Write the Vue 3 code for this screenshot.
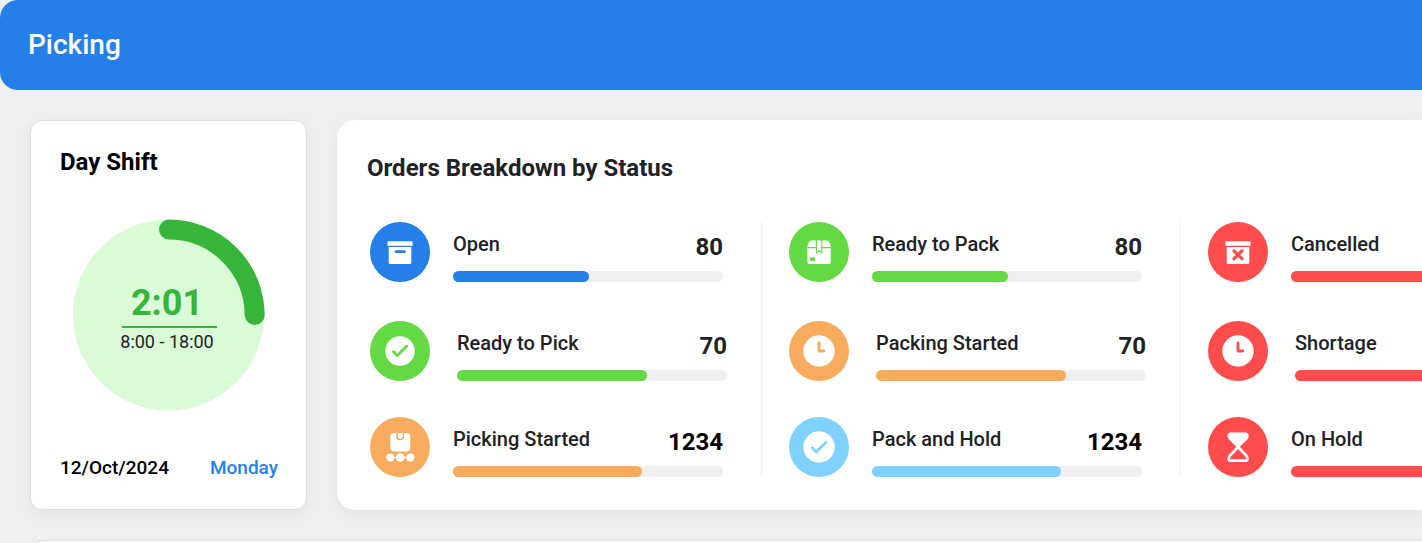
<script setup>
const columns = [
  [
    { label: 'Open', value: '80', fill: 50.5, color: 'blue', icon: 'box' },
    { label: 'Ready to Pick', value: '70', fill: 70.5, color: 'green', icon: 'check', wide: true },
    { label: 'Picking Started', value: '1234', fill: 70, color: 'orange', icon: 'conveyor', strong: true },
  ],
  [
    { label: 'Ready to Pack', value: '80', fill: 50.5, color: 'green', icon: 'package' },
    { label: 'Packing Started', value: '70', fill: 70.5, color: 'orange', icon: 'clock', wide: true },
    { label: 'Pack and Hold', value: '1234', fill: 70, color: 'sky', icon: 'check-large', strong: true },
  ],
  [
    { label: 'Cancelled', fill: 50.5, color: 'red', icon: 'box-x' },
    { label: 'Shortage', fill: 70.5, color: 'red', icon: 'clock', wide: true },
    { label: 'On Hold', fill: 70, color: 'red', icon: 'hourglass' },
  ],
]
</script>

<template>
  <div class="page">
    <header class="topbar">
      <h1>Picking</h1>
    </header>

    <main class="main">
      <section class="shift">
        <h2>Day Shift</h2>
        <div class="dial">
          <svg viewBox="0 0 192 192" aria-hidden="true">
            <circle cx="95.5" cy="96" r="95.5" fill="#dbfad8" />
            <path d="M96 10.500A86 86 0 0 1 181.700 96" fill="none" stroke="#36b53b" stroke-width="20" stroke-linecap="round" />
          </svg>
          <div class="dial-text">
            <strong>2:01</strong>
            <span>8:00 - 18:00</span>
          </div>
        </div>
        <div class="date">
          <span>12/Oct/2024</span>
          <span class="weekday">Monday</span>
        </div>
      </section>

      <section class="orders">
        <h2>Orders Breakdown by Status</h2>
        <div class="columns">
          <ul v-for="(column, c) in columns" :key="c" class="column">
            <li v-for="item in column" :key="item.label" class="item" :class="[item.color, { wide: item.wide }]">
              <svg class="icon" viewBox="0 0 60 60" aria-hidden="true">
                <circle cx="30" cy="30" r="30" fill="currentColor" />
                <g v-if="item.icon === 'box' || item.icon === 'box-x'">
                  <path d="M17.500 19.300H42.500V23.800H17.500Z" fill="#fff" />
                  <path d="M18.700 25H41.300V40.500Q41.300 42 39.800 42H20.200Q18.700 42 18.700 40.500Z" fill="#fff" />
                  <path v-if="item.icon === 'box'" d="M26 29.700H34.500" stroke="currentColor" stroke-width="2.700" stroke-linecap="round" />
                  <path v-else d="M26 28.800L34 36.600M34 28.800L26 36.600" stroke="currentColor" stroke-width="3.200" stroke-linecap="round" />
                </g>
                <g v-else-if="item.icon === 'check'">
                  <circle cx="30" cy="30" r="14.700" fill="#fff" />
                  <path d="M23.500 30.700L27.300 34.500L36.600 25.300" fill="none" stroke="currentColor" stroke-width="2.900" stroke-linecap="round" stroke-linejoin="round" />
                </g>
                <g v-else-if="item.icon === 'check-large'">
                  <circle cx="30" cy="30" r="15.700" fill="#fff" />
                  <path d="M23.300 31L27.200 34.900L37 25.200" fill="none" stroke="currentColor" stroke-width="2.800" stroke-linecap="round" stroke-linejoin="round" />
                </g>
                <g v-else-if="item.icon === 'clock'">
                  <circle cx="30" cy="30" r="15.700" fill="#fff" />
                  <path d="M30 22V30H34.800" fill="none" stroke="currentColor" stroke-width="2.900" stroke-linecap="round" stroke-linejoin="round" />
                </g>
                <g v-else-if="item.icon === 'conveyor'">
                  <rect x="20.300" y="16" width="20" height="18.500" rx="4" fill="#fff" />
                  <path d="M27 15.500V19.700Q27 22.500 30.200 22.500T33.400 19.700V15.500" fill="none" stroke="currentColor" stroke-width="1.400" />
                  <path d="M20 40.500H40" stroke="#fff" stroke-width="1" />
                  <circle cx="20.400" cy="40.500" r="4" fill="#fff" />
                  <circle cx="30.200" cy="40.500" r="4.300" fill="#fff" />
                  <circle cx="40.300" cy="40.500" r="4" fill="#fff" />
                </g>
                <g v-else-if="item.icon === 'package'">
                  <path d="M22.300 18.500H38Q39.500 18.500 40.200 20L41.800 24.200V40Q41.800 42 39.800 42H20.400Q18.400 42 18.400 40V24.200L20 20Q20.700 18.500 22.300 18.500Z" fill="#fff" />
                  <path d="M18.400 25.700H27.500M32.700 25.700H41.800" stroke="currentColor" stroke-width="1.200" />
                  <path d="M27.400 18.300V30.600L30.100 28.700L32.800 30.600V18.300" fill="none" stroke="currentColor" stroke-width="1.100" />
                  <path d="M21 35.400H26.200V38.900H21Z" fill="currentColor" />
                </g>
                <g v-else>
                  <path d="M22.500 16.600H37.800Q39.500 16.600 39.500 19Q39.500 20.600 38.200 22L30.150 30L22 22Q20.700 20.600 20.700 19Q20.700 16.600 22.500 16.600Z" fill="#fff" stroke="#fff" stroke-width="2.400" stroke-linejoin="round" />
                  <path d="M30.150 30L22 38.500Q20.700 40 20.700 42Q20.700 43.600 22.500 43.600H37.800Q39.500 43.600 39.500 42Q39.500 40 38.200 38.500Z" fill="none" stroke="#fff" stroke-width="2.600" stroke-linejoin="round" />
                </g>
              </svg>
              <div class="body">
                <div class="line">
                  <span class="label">{{ item.label }}</span>
                  <strong v-if="item.value" class="value" :class="{ strong: item.strong }">{{ item.value }}</strong>
                </div>
                <div class="track" role="progressbar" :aria-label="item.label" :aria-valuenow="item.fill" aria-valuemin="0" aria-valuemax="100">
                  <div class="fill" :style="{ width: item.fill + '%' }"></div>
                </div>
              </div>
            </li>
          </ul>
        </div>
      </section>
    </main>

    <section class="next"></section>
  </div>
</template>

<style>
body {
  margin: 0;
  background: #efefef;
}
</style>

<style scoped>
.page {
  box-sizing: border-box;
  height: 100vh;
  overflow: hidden;
  display: flex;
  flex-direction: column;
  font-family: Roboto, "Liberation Sans", sans-serif;
  color: #202224;
}
h1,
h2,
ul {
  margin: 0;
  padding: 0;
}
.topbar {
  flex: none;
  display: flex;
  align-items: center;
  height: 90px;
  padding: 0 28px;
  box-sizing: border-box;
  background: #2480e8;
  border-radius: 18px 0 0 18px;
  color: #fff;
}
h1 {
  font-size: 28px;
  line-height: 32px;
  font-weight: 500;
}
h2 {
  font-size: 24px;
  line-height: 28px;
  font-weight: 700;
}
.main {
  flex: none;
  display: flex;
  gap: 30px;
  padding: 30px 0 30px 30px;
}
.shift {
  flex: none;
  box-sizing: border-box;
  width: 277px;
  padding: 27px 28px 27px 29px;
  display: flex;
  flex-direction: column;
  justify-content: space-between;
  background: #fff;
  border: 1px solid #dcdddd;
  border-radius: 12px;
  box-shadow: 0 4px 12px rgba(0, 0, 0, 0.05);
}
.shift h2 {
  color: #000;
}
.dial {
  align-self: center;
  display: grid;
  width: 192px;
  height: 192px;
}
.dial > * {
  grid-area: 1 / 1;
}
.dial-text {
  justify-self: center;
  align-self: center;
  display: flex;
  flex-direction: column;
  align-items: center;
  padding-top: 8px;
}
.dial-text strong {
  box-sizing: border-box;
  width: 95px;
  padding-right: 4px;
  text-align: center;
  font-size: 36px;
  line-height: 42px;
  padding-bottom: 2px;
  color: #36b53b;
  border-bottom: 2px solid #36b53b;
}
.dial-text span {
  padding-right: 4px;
  font-size: 18px;
  line-height: 28px;
}
.date {
  display: flex;
  justify-content: space-between;
  font-size: 19px;
  line-height: 28px;
  font-weight: 500;
  color: #000;
}
.weekday {
  color: #2480e8;
}
.orders {
  flex: 1;
  min-width: 0;
  box-sizing: border-box;
  padding: 34px 0 33px 30px;
  background: #fff;
  border-radius: 18px 0 0 18px;
  box-shadow: 0 4px 12px rgba(0, 0, 0, 0.05);
}
.columns {
  display: flex;
  margin-top: 40px;
  overflow: hidden;
}
.column {
  flex: none;
  list-style: none;
  display: flex;
  flex-direction: column;
  padding: 0 38px 0 27px;
  border-right: 1px solid #efefef;
}
.column:first-child {
  padding-left: 3px;
}
.item {
  display: flex;
  gap: 23px;
  margin-bottom: 36px;
}
.item.wide {
  gap: 27px;
  margin-top: 3px;
  margin-right: -4px;
}
.item:last-child {
  margin-bottom: 0;
}
.icon {
  flex: none;
  width: 60px;
  height: 60px;
}
.body {
  width: 270px;
  display: flex;
  flex-direction: column;
  justify-content: flex-end;
}
.line {
  display: flex;
  justify-content: space-between;
  align-items: flex-start;
  height: 39px;
}
.label {
  font-size: 20px;
  line-height: 24px;
  font-weight: 500;
}
.value {
  font-size: 24px;
  line-height: 30px;
  font-weight: 700;
}
.value.strong {
  color: #000;
}
.track {
  height: 11px;
  border-radius: 6px;
  background: #efefef;
}
.fill {
  height: 100%;
  border-radius: 6px;
  background: currentColor;
}
.blue .icon,
.blue .fill {
  color: #2480e8;
}
.green .icon,
.green .fill {
  color: #64d944;
}
.orange .icon,
.orange .fill {
  color: #f7ac5d;
}
.sky .icon,
.sky .fill {
  color: #80d1ff;
}
.red .icon,
.red .fill {
  color: #ff4c4c;
}
.next {
  flex: 1;
  min-height: 60px;
  margin-left: 30px;
  background: #fff;
  border: 1px solid #dcdddd;
  border-right: 0;
  border-radius: 12px 0 0 0;
}
</style>
